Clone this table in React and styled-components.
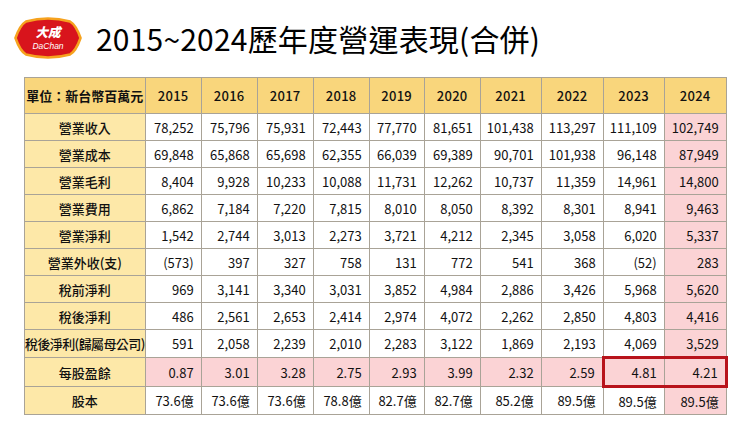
import React from "react";
import styled, { createGlobalStyle, css } from "styled-components";

const GlobalStyle = createGlobalStyle`
  html, body {
    margin: 0;
    padding: 0;
    background: #ffffff;
  }

  body {
    font-family: "Noto Sans CJK TC", "Noto Sans", sans-serif;
    color: #111111;
  }
`;

const Page = styled.div`
  width: 740px;
  height: 435px;
  overflow: hidden;
  box-sizing: border-box;
  padding-top: 16px;
`;

const Header = styled.div`
  display: flex;
  align-items: center;
  padding-left: 13px;
  gap: 13px;
  height: 44px;
`;

const Title = styled.h1`
  margin: 0;
  font-size: 30px;
  font-weight: 400;
  letter-spacing: 0.2px;
  line-height: 1;
  color: #000;
`;

const Table = styled.table`
  margin: 17px 0 0 24px;
  border-collapse: collapse;
  table-layout: fixed;
  font-size: 13px;
`;

const Th = styled.th`
  height: 35px;
  padding: 0;
  background: #f9d67c;
  border: 1px solid #a9a397;
  font-weight: ${p => (p.$label ? 700 : 500)};
  text-align: center;
  white-space: nowrap;
  letter-spacing: ${p => (p.$label ? "0" : "0.3px")};
`;

const Label = styled.td`
  height: 26px;
  padding: 0;
  background: #fde8a8;
  border: 1px solid #a9a397;
  text-align: center;
  white-space: nowrap;
  font-weight: 500;
  letter-spacing: ${p => (p.$long ? "-0.6px" : "0")};
`;

const Cell = styled.td`
  height: 26px;
  padding: 0 7px 0 0;
  background: ${p => (p.$pink ? "#fbd3d5" : "#ffffff")};
  border: 1px solid #a9a397;
  text-align: right;
  white-space: nowrap;

  ${p =>
    p.$mark === "left" &&
    css`
      border-left: 3px solid #b8131b;
      border-top: 3px solid #b8131b;
      border-bottom: 3px solid #b8131b;
    `}

  ${p =>
    p.$mark === "right" &&
    css`
      border-right: 3px solid #b8131b;
      border-top: 3px solid #b8131b;
      border-bottom: 3px solid #b8131b;
    `}
`;

const years = [2015, 2016, 2017, 2018, 2019, 2020, 2021, 2022, 2023, 2024];
const widths = [56, 56, 56, 56, 55, 56, 61, 62, 61, 62];

const rows = [
  ["營業收入", ["78,252", "75,796", "75,931", "72,443", "77,770", "81,651", "101,438", "113,297", "111,109", "102,749"]],
  ["營業成本", ["69,848", "65,868", "65,698", "62,355", "66,039", "69,389", "90,701", "101,938", "96,148", "87,949"]],
  ["營業毛利", ["8,404", "9,928", "10,233", "10,088", "11,731", "12,262", "10,737", "11,359", "14,961", "14,800"]],
  ["營業費用", ["6,862", "7,184", "7,220", "7,815", "8,010", "8,050", "8,392", "8,301", "8,941", "9,463"]],
  ["營業淨利", ["1,542", "2,744", "3,013", "2,273", "3,721", "4,212", "2,345", "3,058", "6,020", "5,337"]],
  ["營業外收(支)", ["(573)", "397", "327", "758", "131", "772", "541", "368", "(52)", "283"]],
  ["稅前淨利", ["969", "3,141", "3,340", "3,031", "3,852", "4,984", "2,886", "3,426", "5,968", "5,620"]],
  ["稅後淨利", ["486", "2,561", "2,653", "2,414", "2,974", "4,072", "2,262", "2,850", "4,803", "4,416"]],
  ["稅後淨利(歸屬母公司)", ["591", "2,058", "2,239", "2,010", "2,283", "3,122", "1,869", "2,193", "4,069", "3,529"], true],
  ["每股盈餘", ["0.87", "3.01", "3.28", "2.75", "2.93", "3.99", "2.32", "2.59", "4.81", "4.21"], false, true],
  ["股本", ["73.6億", "73.6億", "73.6億", "78.8億", "82.7億", "82.7億", "85.2億", "89.5億", "89.5億", "89.5億"]],
];

function Logo() {
  return (
    <svg width="70" height="44" viewBox="0 0 70 44">
      <path
        d="M2.5 22 Q7 9 13 5.5 Q35 -0.5 57 5.5 Q63 9 67.5 22 Q63 35 57 38.5 Q35 44.5 13 38.5 Q7 35 2.5 22 Z"
        fill="#d8141c"
        stroke="#f6a21e"
        strokeWidth="2.6"
        strokeLinejoin="round"
      />
      <text
        x="35"
        y="21"
        textAnchor="middle"
        fill="#fff"
        fontSize="12.5"
        fontWeight="900"
        fontFamily="'Noto Sans CJK TC', sans-serif"
        fontStyle="italic"
      >
        大成
      </text>
      <text
        x="35"
        y="32.5"
        textAnchor="middle"
        fill="#fff"
        fontSize="8.5"
        fontStyle="italic"
        fontFamily="'Liberation Sans', sans-serif"
      >
        DaChan
      </text>
    </svg>
  );
}

export default function App() {
  return (
    <>
      <GlobalStyle />
      <Page>
        <Header>
          <Logo />
          <Title>2015~2024歷年度營運表現(合併)</Title>
        </Header>
        <Table>
          <colgroup>
            <col style={{ width: 119 }} />
            {widths.map((w, i) => (
              <col key={i} style={{ width: w }} />
            ))}
          </colgroup>
          <thead>
            <tr>
              <Th $label>單位：新台幣百萬元</Th>
              {years.map(y => (
                <Th key={y}>{y}</Th>
              ))}
            </tr>
          </thead>
          <tbody>
            {rows.map(([label, values, long, eps]) => (
              <tr key={label}>
                <Label $long={long}>{label}</Label>
                {values.map((v, i) => (
                  <Cell
                    key={i}
                    $pink={eps || i === 9}
                    $mark={eps ? (i === 8 ? "left" : i === 9 ? "right" : undefined) : undefined}
                  >
                    {v}
                  </Cell>
                ))}
              </tr>
            ))}
          </tbody>
        </Table>
      </Page>
    </>
  );
}
